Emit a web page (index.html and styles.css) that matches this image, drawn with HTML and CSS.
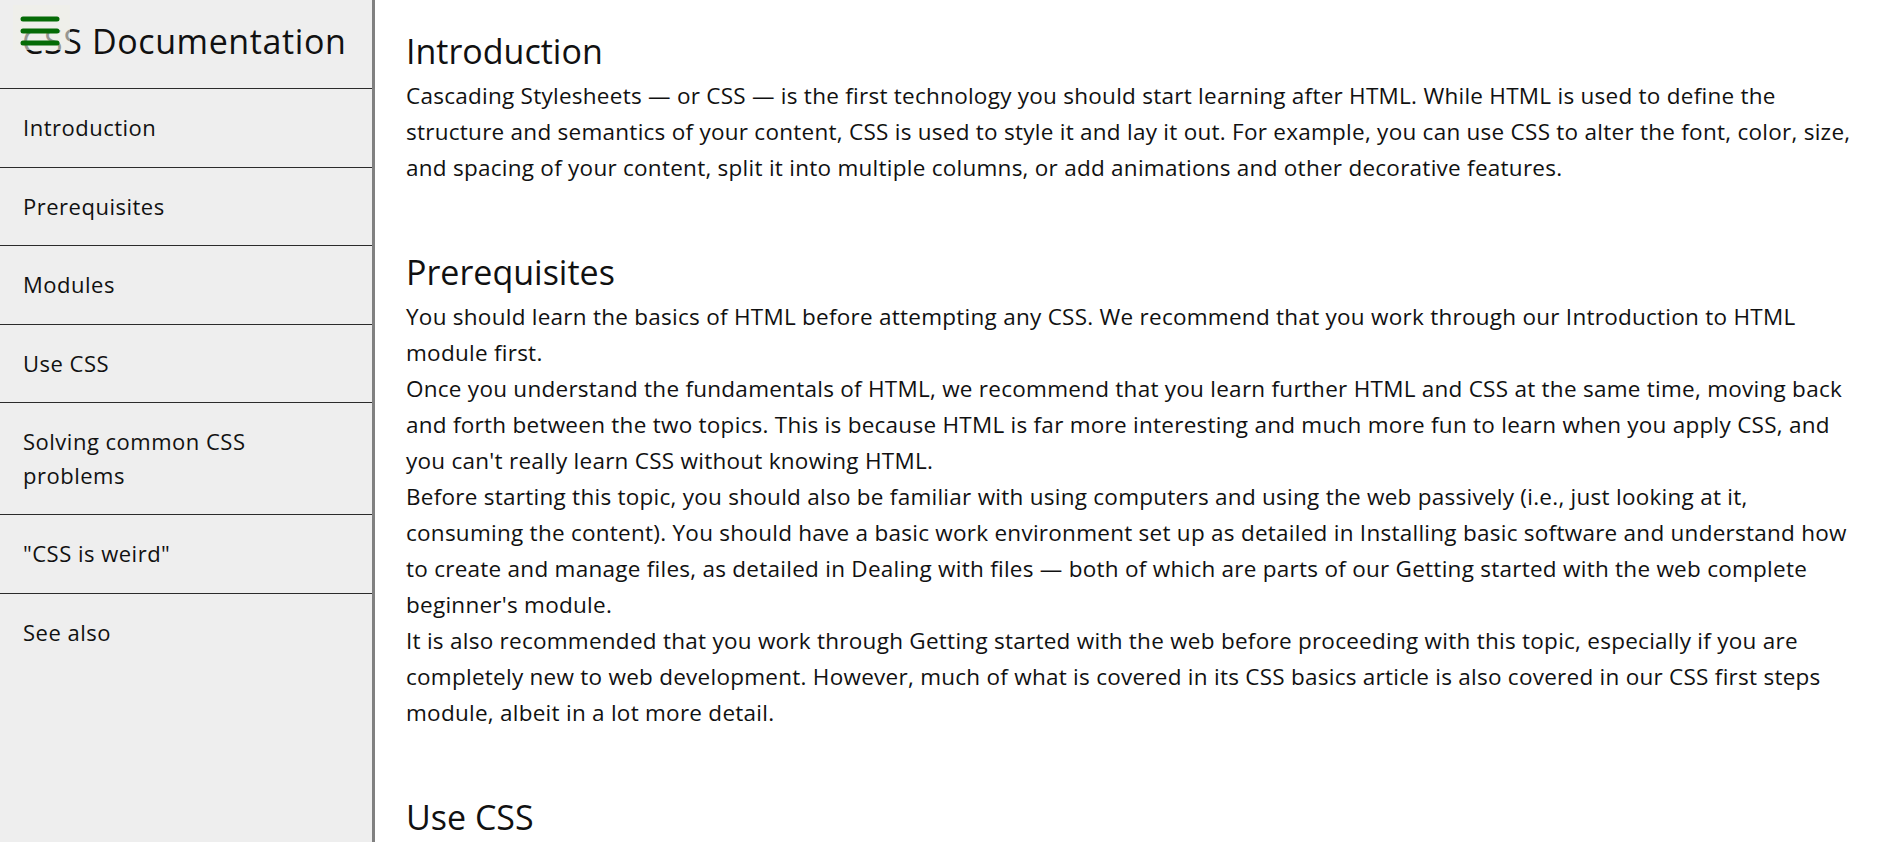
FILE: index.html
```html
<!DOCTYPE html>
<html lang="en">
<head>
<meta charset="utf-8">
<title>CSS Documentation</title>
<link rel="stylesheet" href="styles.css">
</head>
<body>
<div class="page">
  <nav class="sidebar" id="navbar">
    <button class="menu-toggle" aria-label="Toggle navigation">
      <svg width="40" height="34" viewBox="0 0 40 34" aria-hidden="true">
        <line x1="3" y1="5" x2="37" y2="5" stroke="#056b05" stroke-width="5" stroke-linecap="round"/>
        <line x1="3" y1="17" x2="37" y2="17" stroke="#056b05" stroke-width="5" stroke-linecap="round"/>
        <line x1="3" y1="29" x2="37" y2="29" stroke="#056b05" stroke-width="5" stroke-linecap="round"/>
      </svg>
    </button>
    <header class="sidebar-header">CSS Documentation</header>
    <ul class="nav-list">
      <li><a class="nav-link" href="#Introduction">Introduction</a></li>
      <li><a class="nav-link" href="#Prerequisites">Prerequisites</a></li>
      <li><a class="nav-link" href="#Modules">Modules</a></li>
      <li><a class="nav-link" href="#Use_CSS">Use CSS</a></li>
      <li><a class="nav-link" href="#Solving_common_CSS_problems">Solving common CSS problems</a></li>
      <li><a class="nav-link" href="#CSS_is_weird">"CSS is weird"</a></li>
      <li><a class="nav-link" href="#See_also">See also</a></li>
    </ul>
  </nav>
  <main class="main" id="main-doc">
    <section class="main-section" id="Introduction">
      <header class="section-title">Introduction</header>
      <p>Cascading Stylesheets — or CSS — is the first technology you should start learning after HTML. While HTML is used to define the structure and semantics of your content, CSS is used to style it and lay it out. For example, you can use CSS to alter the font, color, size, and spacing of your content, split it into multiple columns, or add animations and other decorative features.</p>
    </section>
    <section class="main-section" id="Prerequisites">
      <header class="section-title">Prerequisites</header>
      <p>You should learn the basics of HTML before attempting any CSS. We recommend that you work through our Introduction to HTML module first.</p>
      <p>Once you understand the fundamentals of HTML, we recommend that you learn further HTML and CSS at the same time, moving back and forth between the two topics. This is because HTML is far more interesting and much more fun to learn when you apply CSS, and you can't really learn CSS without knowing HTML.</p>
      <p>Before starting this topic, you should also be familiar with using computers and using the web passively (i.e., just looking at it, consuming the content). You should have a basic work environment set up as detailed in Installing basic software and understand how to create and manage files, as detailed in Dealing with files — both of which are parts of our Getting started with the web complete beginner's module.</p>
      <p>It is also recommended that you work through Getting started with the web before proceeding with this topic, especially if you are completely new to web development. However, much of what is covered in its CSS basics article is also covered in our CSS first steps module, albeit in a lot more detail.</p>
    </section>
    <section class="main-section" id="Use_CSS">
      <header class="section-title">Use CSS</header>
    </section>
  </main>
</div>
</body>
</html>
```
FILE: styles.css
```css
* { box-sizing: border-box; }
html, body {
  margin: 0;
  padding: 0;
  height: 100%;
  overflow: hidden;
}
body {
  font-family: "Open Sans", "Noto Sans", sans-serif;
  color: #111;
  background: #fff;
}
.page {
  display: flex;
  height: 100vh;
}
.sidebar {
  position: relative;
  flex: 0 0 375px;
  background: #eeeeee;
  border-right: 3px solid #808080;
  height: 100%;
}
.menu-toggle {
  position: absolute;
  top: 5px;
  left: 13px;
  width: 57px;
  height: 45px;
  padding: 6px 0 0 7px;
  border: none;
  background: rgba(240, 240, 232, 0.6);
  display: block;
}
.menu-toggle svg { display: block; }
.sidebar-header {
  font-size: 34px;
  letter-spacing: 0.6px;
  line-height: 42px;
  padding: 20px 0 25px 22px;
  border-bottom: 1px solid #2b2b2b;
  height: 89px;
  white-space: nowrap;
}
.nav-list {
  list-style: none;
  margin: 0;
  padding: 0;
}
.nav-list li {
  border-bottom: 1px solid #2b2b2b;
}
.nav-list li:last-child {
  border-bottom: none;
}
.nav-link {
  display: block;
  font-size: 22px;
  letter-spacing: 0.5px;
  line-height: 33.4px;
  padding: 22.1px 60px 22.1px 23px;
  color: #111;
  text-decoration: none;
}
.main {
  flex: 1;
  padding: 28px 26px 0 31px;
  overflow: hidden;
}
.main-section {
  margin-bottom: 63px;
}
.section-title {
  font-size: 34px;
  line-height: 46px;
  margin-bottom: 4px;
}
.main-section p {
  margin: 0;
  font-size: 22.5px;
  letter-spacing: 0.26px;
  line-height: 36px;
}
```
